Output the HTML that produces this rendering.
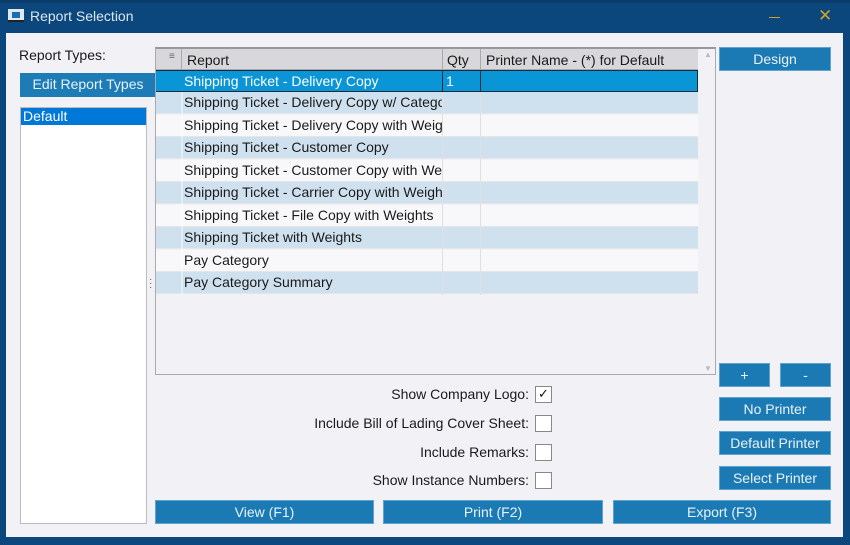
<!DOCTYPE html>
<html><head><meta charset="utf-8"><style>
*{margin:0;padding:0;box-sizing:border-box}
body{width:850px;height:545px;background:#0b477c;font-family:"Liberation Sans",Arial,sans-serif;font-size:14px;color:#1a1a1a;position:relative;overflow:hidden}
.a{position:absolute}
.btn{position:absolute;background:#1b7ab4;color:#e8f2fa;text-align:center;font-size:14px;border:1px solid #5fa3cf}
.t{position:absolute;white-space:nowrap}
.cb{position:absolute;width:17px;height:17px;background:#fff;border:1px solid #888}
.row{position:absolute;left:156px;width:542px;height:22px;border-bottom:1px solid #e6e6e6}
.row div{position:absolute;top:0;height:20px;line-height:20px;white-space:nowrap;overflow:hidden}
</style></head><body>
<div class="a" style="left:0;top:0;width:850px;height:3px;background:#0a3d6a"></div>
<div class="a" style="left:8px;top:9px;width:16px;height:13px;background:#dfe9f3;border-bottom:2px solid #222"></div>
<div class="a" style="left:12px;top:12px;width:8px;height:6px;background:#1b6fb0"></div>
<div class="t" style="left:30px;top:8px;color:#dce6f0;font-size:14px">Report Selection</div>
<div class="a" style="left:769px;top:17px;width:11px;height:1px;background:#c9a227"></div>
<div class="t" style="left:818px;top:6px;color:#c9a227;font-size:17px">✕</div>

<div class="a" style="left:6px;top:33px;width:837px;height:504px;background:#f2f2f6"></div>

<div class="t" style="left:19px;top:47px">Report Types:</div>
<div class="btn" style="left:20px;top:73px;width:136px;height:24px;line-height:22px;border:none;background:#1d7cb6">Edit Report Types</div>
<div class="a" style="left:20px;top:107px;width:127px;height:417px;background:#fff;border:1px solid #bbb"></div>
<div class="a" style="left:21px;top:108px;width:125px;height:17px;background:#0078d7;color:#fff;line-height:17px;padding-left:2px">Default</div>

<div class="a" style="left:155px;top:47px;width:561px;height:328px;background:#f2f2f6;border:1px solid #aaa;border-top:2px solid #999"></div>
<div class="a" style="left:156px;top:49px;width:542px;height:21px;background:#d8d8dc;border-bottom:1px solid #aaa"></div>
<div class="t" style="left:169px;top:51px;font-size:10px;color:#666">≡</div>
<div class="a" style="left:181px;top:49px;width:1px;height:21px;background:#aaa"></div>
<div class="a" style="left:442px;top:49px;width:1px;height:21px;background:#aaa"></div>
<div class="a" style="left:480px;top:49px;width:1px;height:21px;background:#aaa"></div>
<div class="t" style="left:187px;top:52px">Report</div>
<div class="t" style="left:447px;top:52px">Qty</div>
<div class="t" style="left:486px;top:52px">Printer Name - (*) for Default</div>
<div class="t" style="left:704px;top:50px;font-size:8px;color:#bbb">▲</div>
<div class="t" style="left:704px;top:364px;font-size:8px;color:#bbb">▼</div>

<div class="row" style="top:70px;background:#0995d6;color:#fff;border:1.5px solid #1a2a3a;border-left:none"><div style="left:28px">Shipping Ticket - Delivery Copy</div><div style="left:290px">1</div><div style="left:286px;width:1px;height:22px;background:#1a2a3a"></div><div style="left:324px;width:1px;height:22px;background:#1a2a3a"></div></div>
<div class="row" style="top:92px;background:#cfe1ef"><div style="left:28px;width:258px">Shipping Ticket - Delivery Copy w/ Category</div></div>
<div class="row" style="top:115px;background:#f8f8fa"><div style="left:28px;width:258px">Shipping Ticket - Delivery Copy with Weights</div></div>
<div class="row" style="top:137px;background:#cfe1ef"><div style="left:28px;width:258px">Shipping Ticket - Customer Copy</div></div>
<div class="row" style="top:160px;background:#f8f8fa"><div style="left:28px;width:258px">Shipping Ticket - Customer Copy with Weights</div></div>
<div class="row" style="top:182px;background:#cfe1ef"><div style="left:28px;width:258px">Shipping Ticket - Carrier Copy with Weights</div></div>
<div class="row" style="top:205px;background:#f8f8fa"><div style="left:28px;width:258px">Shipping Ticket - File Copy with Weights</div></div>
<div class="row" style="top:227px;background:#cfe1ef"><div style="left:28px;width:258px">Shipping Ticket with Weights</div></div>
<div class="row" style="top:250px;background:#f8f8fa"><div style="left:28px;width:258px">Pay Category</div></div>
<div class="row" style="top:272px;background:#cfe1ef"><div style="left:28px;width:258px">Pay Category Summary</div></div>
<div class="a" style="left:181px;top:92px;width:2px;height:203px;background:#fff;opacity:.4"></div>
<div class="a" style="left:442px;top:92px;width:1px;height:203px;background:#e0e0e0"></div>
<div class="a" style="left:480px;top:92px;width:1px;height:203px;background:#e0e0e0"></div>
<div class="t" style="left:149px;top:278px;font-size:10px;color:#555;line-height:4px">·<br>·<br>·</div>

<div class="btn" style="left:719px;top:47px;width:112px;height:24px;line-height:22px">Design</div>
<div class="btn" style="left:719px;top:363px;width:51px;height:24px;line-height:22px">+</div>
<div class="btn" style="left:780px;top:363px;width:51px;height:24px;line-height:22px">-</div>
<div class="btn" style="left:719px;top:397px;width:112px;height:24px;line-height:22px">No Printer</div>
<div class="btn" style="left:719px;top:431px;width:112px;height:24px;line-height:22px">Default Printer</div>
<div class="btn" style="left:719px;top:466px;width:112px;height:24px;line-height:22px">Select Printer</div>

<div class="t" style="right:321px;top:386px">Show Company Logo:</div>
<div class="cb" style="left:535px;top:386px"><div style="position:absolute;left:2px;top:-1px;font-size:13px;color:#111">✓</div></div>
<div class="t" style="right:321px;top:415px">Include Bill of Lading Cover Sheet:</div>
<div class="cb" style="left:535px;top:415px"></div>
<div class="t" style="right:321px;top:444px">Include Remarks:</div>
<div class="cb" style="left:535px;top:444px"></div>
<div class="t" style="right:321px;top:472px">Show Instance Numbers:</div>
<div class="cb" style="left:535px;top:472px"></div>

<div class="btn" style="left:155px;top:500px;width:219px;height:24px;line-height:22px">View (F1)</div>
<div class="btn" style="left:383px;top:500px;width:220px;height:24px;line-height:22px">Print (F2)</div>
<div class="btn" style="left:613px;top:500px;width:218px;height:24px;line-height:22px">Export (F3)</div>
</body></html>
